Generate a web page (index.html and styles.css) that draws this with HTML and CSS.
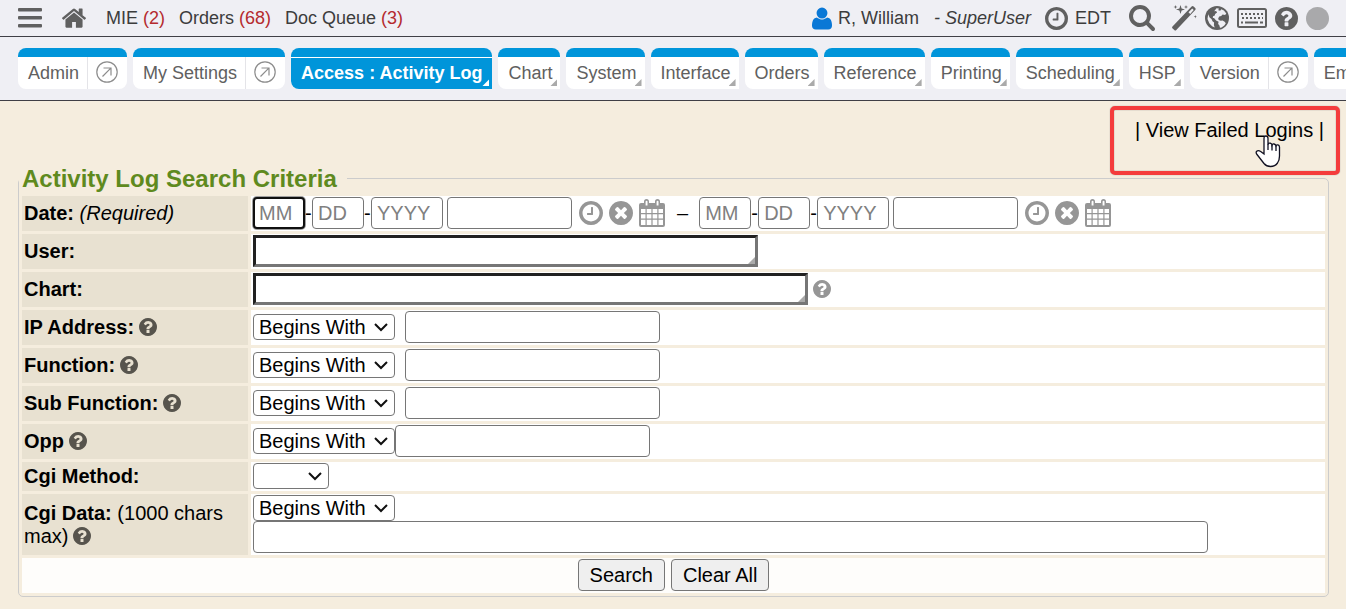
FILE: index.html
```html
<!DOCTYPE html>
<html lang="en">
<head>
<meta charset="utf-8">
<title>Activity Log</title>
<link rel="stylesheet" href="styles.css">
</head>
<body>
<svg class="sprite" aria-hidden="true">
  <symbol id="help" viewBox="128 128 1536 1536"><path d="M1024 1376v-192q0-14-9-23t-23-9h-192q-14 0-23 9t-9 23v192q0 14 9 23t23 9h192q14 0 23-9t9-23zm256-672q0-88-55.500-163t-138.500-116-170-41q-243 0-371 213-15 24 8 42l132 100q7 6 19 6 16 0 25-12 53-68 86-92 34-24 86-24 48 0 85.500 26t37.500 59q0 38-20 61t-68 45q-63 28-115.500 86.500t-52.500 125.500v36q0 14 9 23t23 9h192q14 0 23-9t9-23q0-19 21.500-49.500t54.500-49.500q32-18 49-28.500t46-35 44.500-48 28-60.500 12.500-81zm384 192q0 209-103 385.500t-279.500 279.500-385.500 103-385.500-103-279.500-279.500-103-385.500 103-385.500 279.500-279.500 385.500-103 385.500 103 279.500 279.500 103 385.500z"/></symbol>
  <symbol id="clear" viewBox="128 128 1536 1536"><path d="M1277 1122q0-26-19-45l-181-181 181-181q19-19 19-45 0-27-19-46l-90-90q-19-19-46-19-26 0-45 19l-181 181-181-181q-19-19-45-19-27 0-46 19l-90 90q-19 19-19 46 0 26 19 45l181 181-181 181q-19 19-19 45 0 27 19 46l90 90q19 19 46 19 26 0 45-19l181-181 181 181q19 19 45 19 27 0 46-19l90-90q19-19 19-46zm387-226q0 209-103 385.500t-279.500 279.500-385.500 103-385.500-103-279.500-279.500-103-385.500 103-385.500 279.500-279.500 385.500-103 385.500 103 279.500 279.500 103 385.500z"/></symbol>
  <symbol id="clock" viewBox="128 128 1536 1536"><path d="M1024 544v448q0 14-9 23t-23 9h-320q-14 0-23-9t-9-23v-64q0-14 9-23t23-9h224v-352q0-14 9-23t23-9h64q14 0 23 9t9 23zm416 352q0-148-73-273t-198-198-273-73-273 73-198 198-73 273 73 273 198 198 273 73 273-73 198-198 73-273zm224 0q0 209-103 385.500t-279.500 279.500-385.500 103-385.500-103-279.500-279.500-103-385.500 103-385.500 279.500-279.500 385.500-103 385.500 103 279.500 279.500 103 385.500z"/></symbol>
  <symbol id="home" viewBox="89 240 1614 1296"><path d="M1472 992v480q0 26-19 45t-45 19h-384v-384h-256v384h-384q-26 0-45-19t-19-45v-480q0-1 .5-3t.5-3l575-474 575 474q1 2 1 6zm223-69l-62 74q-8 9-21 11h-3q-13 0-21-7l-692-577-692 577q-12 8-24 7-13-2-21-11l-62-74q-8-10-7-23.500t11-21.500l719-599q32-26 76-26t76 26l244 204v-195q0-14 9-23t23-9h192q14 0 23 9t9 23v408l219 182q10 8 11 21.500t-7 23.500z"/></symbol>
  <symbol id="user" viewBox="192 128 1408 1536"><path d="M1600 1405q0 120-73 189.500t-194 69.500h-874q-121 0-194-69.500t-73-189.500q0-53 3.500-103.500t14-109 26.500-108.500 43-97.500 62-81 85.500-53.500 111.500-20q9 0 42 21.500t74.500 48 108 48 133.500 21.500 133.500-21.500 108-48 74.500-48 42-21.500q61 0 111.500 20t85.500 53.500 62 81 43 97.500 26.500 108.500 14 109 3.500 103.500zm-320-893q0 159-112.500 271.500t-271.500 112.500-271.500-112.500-112.500-271.500 112.500-271.500 271.500-112.500 271.500 112.500 112.500 271.500z"/></symbol>
  <symbol id="search" viewBox="64 128 1664 1664"><path d="M1216 832q0-185-131.500-316.500t-316.500-131.500-316.500 131.500-131.500 316.500 131.500 316.500 316.500 131.500 316.500-131.500 131.500-316.500zm512 832q0 52-38 90t-90 38q-54 0-90-38l-343-342q-179 124-399 124-143 0-273.500-55.500t-225-150-150-225-55.500-273.500 55.500-273.500 150-225 225-150 273.500-55.500 273.500 55.500 225 150 150 225 55.500 273.500q0 220-124 399l343 343q37 37 37 90z"/></symbol>
  <symbol id="calendar" viewBox="0 0 26 28"><path fill-rule="evenodd" d="M2 4h3V2.500a2.500 2.500 0 0 1 5 0V4h6V2.500a2.500 2.500 0 0 1 5 0V4h3a2 2 0 0 1 2 2v20a2 2 0 0 1-2 2H2a2 2 0 0 1-2-2V6a2 2 0 0 1 2-2zM6.600 2.800v3.800h1.900V2.800a.9.9 0 0 0-1.900 0zM17.600 2.800v3.800h1.900V2.800a.9.9 0 0 0-1.900 0zM2 10v4h4.500v-4zM7.700 10v4h4.700v-4zM13.600 10v4h4.700v-4zM19.500 10v4H24v-4zM2 15.200v4.300h4.500v-4.300zM7.700 15.200v4.300h4.700v-4.300zM13.600 15.200v4.300h4.700v-4.300zM19.500 15.200v4.300H24v-4.300zM2 20.700V26h4.500v-5.300zM7.700 20.700V26h4.700v-5.300zM13.600 20.700V26h4.700v-5.300zM19.500 20.700V26H24v-5.300z"/></symbol>
  <symbol id="open" viewBox="0 0 22 22"><g fill="none" stroke="currentColor" stroke-width="1.200"><circle cx="11" cy="11" r="10.200"/><path d="M6.500 15.500L14.800 7.200M7.500 7H15v7.500"/></g></symbol>
</svg>

<header class="topbar">
  <div class="topbar-left">
    <button class="icon-button" aria-label="Menu"><svg width="24" height="20" viewBox="0 0 24 20"><path d="M1 0h22a1 1 0 0 1 1 1v1.500a1 1 0 0 1-1 1H1a1 1 0 0 1-1-1V1a1 1 0 0 1 1-1zM1 8h22a1 1 0 0 1 1 1v1.500a1 1 0 0 1-1 1H1a1 1 0 0 1-1-1V9a1 1 0 0 1 1-1zM1 16h22a1 1 0 0 1 1 1v1.500a1 1 0 0 1-1 1H1a1 1 0 0 1-1-1V17a1 1 0 0 1 1-1z"/></svg></button>
    <a class="icon-button" href="#home" aria-label="Home"><svg width="24" height="20"><use href="#home"/></svg></a>
    <nav class="queues">
      <a href="#mie">MIE <span class="count">(2)</span></a>
      <a href="#orders">Orders <span class="count">(68)</span></a>
      <a href="#docs">Doc Queue <span class="count">(3)</span></a>
    </nav>
  </div>
  <div class="topbar-right">
    <a class="account" href="#account"><svg class="user-icon" width="20" height="23"><use href="#user"/></svg>R, William</a>
    <em class="role">- SuperUser</em>
    <span class="zone"><svg width="23" height="23"><use href="#clock"/></svg>EDT</span>
    <div class="tools">
      <button class="icon-button search-button" aria-label="Search"><svg width="26" height="26"><use href="#search"/></svg></button>
      <button class="icon-button" aria-label="Quick actions"><svg width="25" height="27" viewBox="0 0 25 27"><path fill-rule="evenodd" d="M.5 21.500L19.600 1.400q1-1 2 0l1.600 1.600q.9 1 0 1.900L4.300 25q-1 1-2 0L.6 23.400q-1-1-.1-1.900zM16.500 7.300l1.700 1.600 3.500-4-1.500-1.500z"/><path d="M8.500 0l1.100 3.400L13 4.500 9.600 5.600 8.500 9 7.400 5.600 4 4.500l3.400-1.100zM3.500 0l.5 1.500 1.500.5-1.500.5L3.500 4 3 2.500 1.500 2 3 1.500zM14 0l.5 1.500L16 2l-1.500.5L14 4l-.5-1.500L12 2l1.500-.5zM23.300 10l.4 1.300 1.300.4-1.300.4-.4 1.300-.4-1.300-1.300-.4 1.300-.4z"/></svg></button>
      <button class="icon-button" aria-label="Language"><svg width="24" height="24" viewBox="0 0 24 24"><circle cx="12" cy="12" r="12"/><path class="land" d="M11.500 2.200l2.400.2-.6 1.800 1.900.6 1.100-1.500 2.600 1.100 2.400 3-1.200 1.500-2.500-.3-1.400 1.500-2 .4-1 1.900.5 1.700 2 .6 1.900-.2 2 1.300 1.200 1.400-1.500 2.200-2.800 2.100-1.500.3-.7-2.500-1.200-1.300.5-2.300-2.500-1.300-2.100-2.300-1.200-.2.200-1.600 1.800-.8.300-1.600 2-1.500-1-1.400-1.900.2zM3.200 8.200l1.400 3.400 1.900 1.500 1 2.200 1.600 1.200-.2 2.400.8 2.500-2.600-1.200-2.800-3-1.800-4.200z"/></svg></button>
      <button class="icon-button" aria-label="Keyboard shortcuts"><svg width="30" height="20" viewBox="0 0 30 20"><g fill="none" stroke="currentColor" stroke-width="2"><rect x="1" y="1" width="28" height="18" rx="1.500"/><path stroke-dasharray="2 2" d="M4 6h22M5 10h21"/><path d="M4 14.500h2M8 14.500h13M23 14.500h3"/></g></svg></button>
      <button class="icon-button" aria-label="Help"><svg width="23" height="23"><use href="#help"/></svg></button>
      <span class="status"></span>
    </div>
  </div>
</header>

<nav class="tabs">
  <div class="tab split"><a href="#admin">Admin</a><a class="pop" href="#admin-new" aria-label="Open Admin"><svg width="22" height="22"><use href="#open"/></svg></a></div>
  <div class="tab split"><a href="#settings">My Settings</a><a class="pop" href="#settings-new" aria-label="Open My Settings"><svg width="22" height="22"><use href="#open"/></svg></a></div>
  <div class="tab menu active"><a href="#access">Access : Activity Log</a></div>
  <div class="tab menu"><a href="#chart">Chart</a></div>
  <div class="tab menu"><a href="#system">System</a></div>
  <div class="tab menu"><a href="#interface">Interface</a></div>
  <div class="tab menu"><a href="#orders-tab">Orders</a></div>
  <div class="tab menu"><a href="#reference">Reference</a></div>
  <div class="tab menu"><a href="#printing">Printing</a></div>
  <div class="tab menu"><a href="#scheduling">Scheduling</a></div>
  <div class="tab menu"><a href="#hsp">HSP</a></div>
  <div class="tab split"><a href="#version">Version</a><a class="pop" href="#version-new" aria-label="Open Version"><svg width="22" height="22"><use href="#open"/></svg></a></div>
  <div class="tab menu"><a href="#em">Em</a></div>
</nav>

<main>
  <div class="page-links">
    <span>| <a href="#failed">View Failed Logins</a> |</span>
    <div class="callout"></div>
    <svg class="pointer" width="26" height="34" viewBox="0 0 26 34"><path d="M9 3.500Q9 1 11 1t2 2.500V9.500q.3-1.500 2-1.300T17 10q.5-1.400 2-1t2 1.800q.5-1.200 1.900-.9T24.500 12v9q0 4-2 7-2.500 3.500-7 3.500-4 0-6.500-3L2 19.500q-1.500-2-.3-3.200 1.500-1.300 4 .2L9 19z" fill="#fff" stroke="#112" stroke-width="1.300"/><path d="M13 9v6M17 10v5.500M21 11v5" fill="none" stroke="#112" stroke-width="1.300"/></svg>
  </div>

  <form>
    <fieldset>
      <legend>Activity Log Search Criteria</legend>
      <table>
        <tr>
          <th scope="row"><label for="from-month">Date:</label> <em>(Required)</em></th>
          <td><div class="line">
            <input class="short focused" id="from-month" placeholder="MM"><span class="dash">-</span><input class="short" aria-label="From day" placeholder="DD"><span class="dash">-</span><input class="year" aria-label="From year" placeholder="YYYY"><input class="time" aria-label="From time">
            <span class="date-tools"><button type="button" aria-label="Now"><svg width="24" height="24"><use href="#clock"/></svg></button><button type="button" aria-label="Clear"><svg width="24" height="24"><use href="#clear"/></svg></button><button type="button" aria-label="Calendar"><svg width="26" height="28"><use href="#calendar"/></svg></button></span>
            <span class="to">–</span>
            <input class="short" aria-label="To month" placeholder="MM"><span class="dash">-</span><input class="short" aria-label="To day" placeholder="DD"><span class="dash">-</span><input class="year" aria-label="To year" placeholder="YYYY"><input class="time" aria-label="To time">
            <span class="date-tools"><button type="button" aria-label="Now"><svg width="24" height="24"><use href="#clock"/></svg></button><button type="button" aria-label="Clear"><svg width="24" height="24"><use href="#clear"/></svg></button><button type="button" aria-label="Calendar"><svg width="26" height="28"><use href="#calendar"/></svg></button></span>
          </div></td>
        </tr>
        <tr>
          <th scope="row"><label for="user-name">User:</label></th>
          <td><div class="line"><span class="lookup"><input class="user-field" id="user-name"></span></div></td>
        </tr>
        <tr>
          <th scope="row"><label for="chart-name">Chart:</label></th>
          <td><div class="line"><span class="lookup"><input class="chart-field" id="chart-name"></span><svg class="hint pale" width="18" height="18"><use href="#help"/></svg></div></td>
        </tr>
        <tr>
          <th scope="row"><label for="ip">IP Address:</label><svg class="hint" width="18" height="18"><use href="#help"/></svg></th>
          <td><div class="line spaced"><select aria-label="IP Address match"><option>Begins With</option></select><input class="term" id="ip"></div></td>
        </tr>
        <tr>
          <th scope="row"><label for="function">Function:</label><svg class="hint" width="18" height="18"><use href="#help"/></svg></th>
          <td><div class="line spaced"><select aria-label="Function match"><option>Begins With</option></select><input class="term" id="function"></div></td>
        </tr>
        <tr>
          <th scope="row"><label for="subfunction">Sub Function:</label><svg class="hint" width="18" height="18"><use href="#help"/></svg></th>
          <td><div class="line spaced"><select aria-label="Sub Function match"><option>Begins With</option></select><input class="term" id="subfunction"></div></td>
        </tr>
        <tr>
          <th scope="row"><label for="opp">Opp</label><svg class="hint" width="18" height="18"><use href="#help"/></svg></th>
          <td><div class="line"><select aria-label="Opp match"><option>Begins With</option></select><input class="term" id="opp"></div></td>
        </tr>
        <tr>
          <th scope="row"><label for="method">Cgi Method:</label></th>
          <td><div class="line"><select class="method" id="method"><option></option></select></div></td>
        </tr>
        <tr>
          <th scope="row"><label for="data">Cgi Data:</label> <span class="note">(1000 chars max)</span><svg class="hint" width="18" height="18"><use href="#help"/></svg></th>
          <td><div class="stack"><select aria-label="Cgi Data match"><option>Begins With</option></select><input class="data" id="data"></div></td>
        </tr>
        <tr>
          <td class="actions" colspan="2"><div class="line"><button type="submit">Search</button><button type="reset">Clear All</button></div></td>
        </tr>
      </table>
    </fieldset>
  </form>
</main>
</body>
</html>
```

FILE: styles.css
```css
* { box-sizing: border-box; }
body {
  margin: 0;
  background: #f5edde;
  color: #000;
  font: 20px/23px "Liberation Sans", Arial, sans-serif;
  overflow-x: hidden;
}
a { color: inherit; text-decoration: none; }
svg { display: block; fill: currentColor; }
.sprite { position: absolute; width: 0; height: 0; }
input, select, button { font: inherit; color: inherit; margin: 0; }

.topbar {
  display: flex;
  justify-content: space-between;
  height: 37px;
  padding: 0 17px 0 18px;
  background: #efeff4;
  border-bottom: 1px solid #3f3f46;
  color: #3c3c3c;
  font-size: 18px;
}
.topbar-left, .topbar-right, .queues, .account, .zone, .tools { display: flex; align-items: center; white-space: nowrap; }
.topbar-left { gap: 20px; }
.queues { gap: 14px; }
.count { color: #b52a2e; }
.icon-button { display: block; padding: 0; border: 0; background: none; color: #606060; }
.account { gap: 6px; }
.user-icon { color: #0a78d6; }
.role { margin-left: 15px; }
.zone { gap: 7px; margin-left: 14px; }
.zone svg { color: #606060; }
.tools { gap: 8px; margin-left: 18px; }
.search-button { margin-right: 9px; }
.land { fill: #efeff4; }
.status { width: 23px; height: 23px; border-radius: 50%; background: #a9a9ab; }

.tabs {
  display: flex;
  gap: 6px;
  height: 64px;
  padding: 11px 0 11px 18px;
  overflow: hidden;
  background: #efeff4;
  border-bottom: 1px solid #3f3f46;
  color: #606060;
  font-size: 18px;
}
.tab {
  position: relative;
  display: flex;
  flex: none;
  border-top: 9px solid #0095da;
  border-radius: 8px;
  background: #fff;
  white-space: nowrap;
}
.tab a { padding: 5px 8px 0 10px; }
.tab .pop { display: flex; align-items: center; padding: 0 9px 2px 8px; border-left: 1px solid #e4e4e8; color: #8c8c8c; }
.tab.menu { border-bottom-right-radius: 0; }
.menu::after, .lookup::after {
  content: "";
  position: absolute;
  right: 3px;
  bottom: 3px;
  width: 7px;
  height: 7px;
  background: #aaa;
  clip-path: polygon(100% 0, 100% 100%, 0 100%);
}
.tab.active { background: #0095da; color: #fff; font-weight: bold; box-shadow: inset 0 1px #fff; }
.tab.active a { padding-right: 10px; }
.tab.active::after { background: #fff; }

.page-links {
  position: relative;
  display: flex;
  justify-content: flex-end;
  padding: 18px 22px 22px;
}
.callout {
  position: absolute;
  top: 5px;
  right: 6px;
  width: 230px;
  height: 69px;
  border: 4px solid #f43c3c;
  border-radius: 5px;
  box-shadow: inset 0 0 1px #555, 0 0 1px #777;
}
.pointer { position: absolute; top: 34px; right: 65px; }

fieldset {
  min-width: 0;
  margin: 0 17px 12px 18px;
  padding: 0;
  border: 1px solid #ccc;
  border-radius: 5px;
}
legend { padding: 0 10px 0 3px; color: #5f8a1e; font-size: 24px; line-height: 29px; font-weight: bold; }
table { width: 100%; border-collapse: separate; border-spacing: 3px; }
th { width: 226px; padding: 0 2px; background: #e8e1d1; text-align: left; }
th em, .note { font-weight: normal; }
td { padding: 1px 2px 2px; background: #fff; }
.line { display: flex; align-items: center; }
.spaced { gap: 10px; }
.stack { display: flex; flex-direction: column; align-items: flex-start; }
.hint { display: inline-block; margin-left: 5px; vertical-align: -2px; color: #57544d; }
.pale { color: #969696; }

input {
  height: 32px;
  padding: 0 5px;
  border: 1px solid #767676;
  border-radius: 4px;
  background: #fff;
}
input::placeholder { color: #808080; }
.dash { width: 7px; }
.short { width: 52px; }
.year { width: 72px; }
.time { width: 125px; margin-left: 4px; }
.focused { border: 2px solid #101010; padding: 0 4px; box-shadow: 0 0 0 1px #10101066; }
.term { width: 255px; }
.data { width: 955px; max-width: 100%; }
.date-tools { display: flex; align-items: center; gap: 6px; margin-left: 7px; }
.date-tools button { padding: 0; border: 0; background: none; color: #969696; }
.to { margin: 0 11px 0 12px; }
.lookup { position: relative; display: flex; }
.lookup input { border: 3px solid; border-color: #212121 #767676 #767676 #212121; border-radius: 0; }
.user-field { width: 505px; }
.chart-field { width: 555px; }
select {
  appearance: none;
  width: 142px;
  height: 26px;
  padding: 0 20px 0 5px;
  border: 1px solid #767676;
  border-radius: 4px;
  background: #fff url("data:image/svg+xml,%3Csvg xmlns='http://www.w3.org/2000/svg' width='14' height='10' viewBox='0 0 14 10'%3E%3Cpath d='M1 2l6 6 6-6' fill='none' stroke='%23101010' stroke-width='2'/%3E%3C/svg%3E") no-repeat right 6px center;
}
.method { width: 76px; }
.actions { background: #fefdfb; }
.actions .line { justify-content: center; gap: 6px; }
.actions button { height: 32px; padding: 0 11px; border: 1px solid #767676; border-radius: 4px; background: #efefef; }
```
